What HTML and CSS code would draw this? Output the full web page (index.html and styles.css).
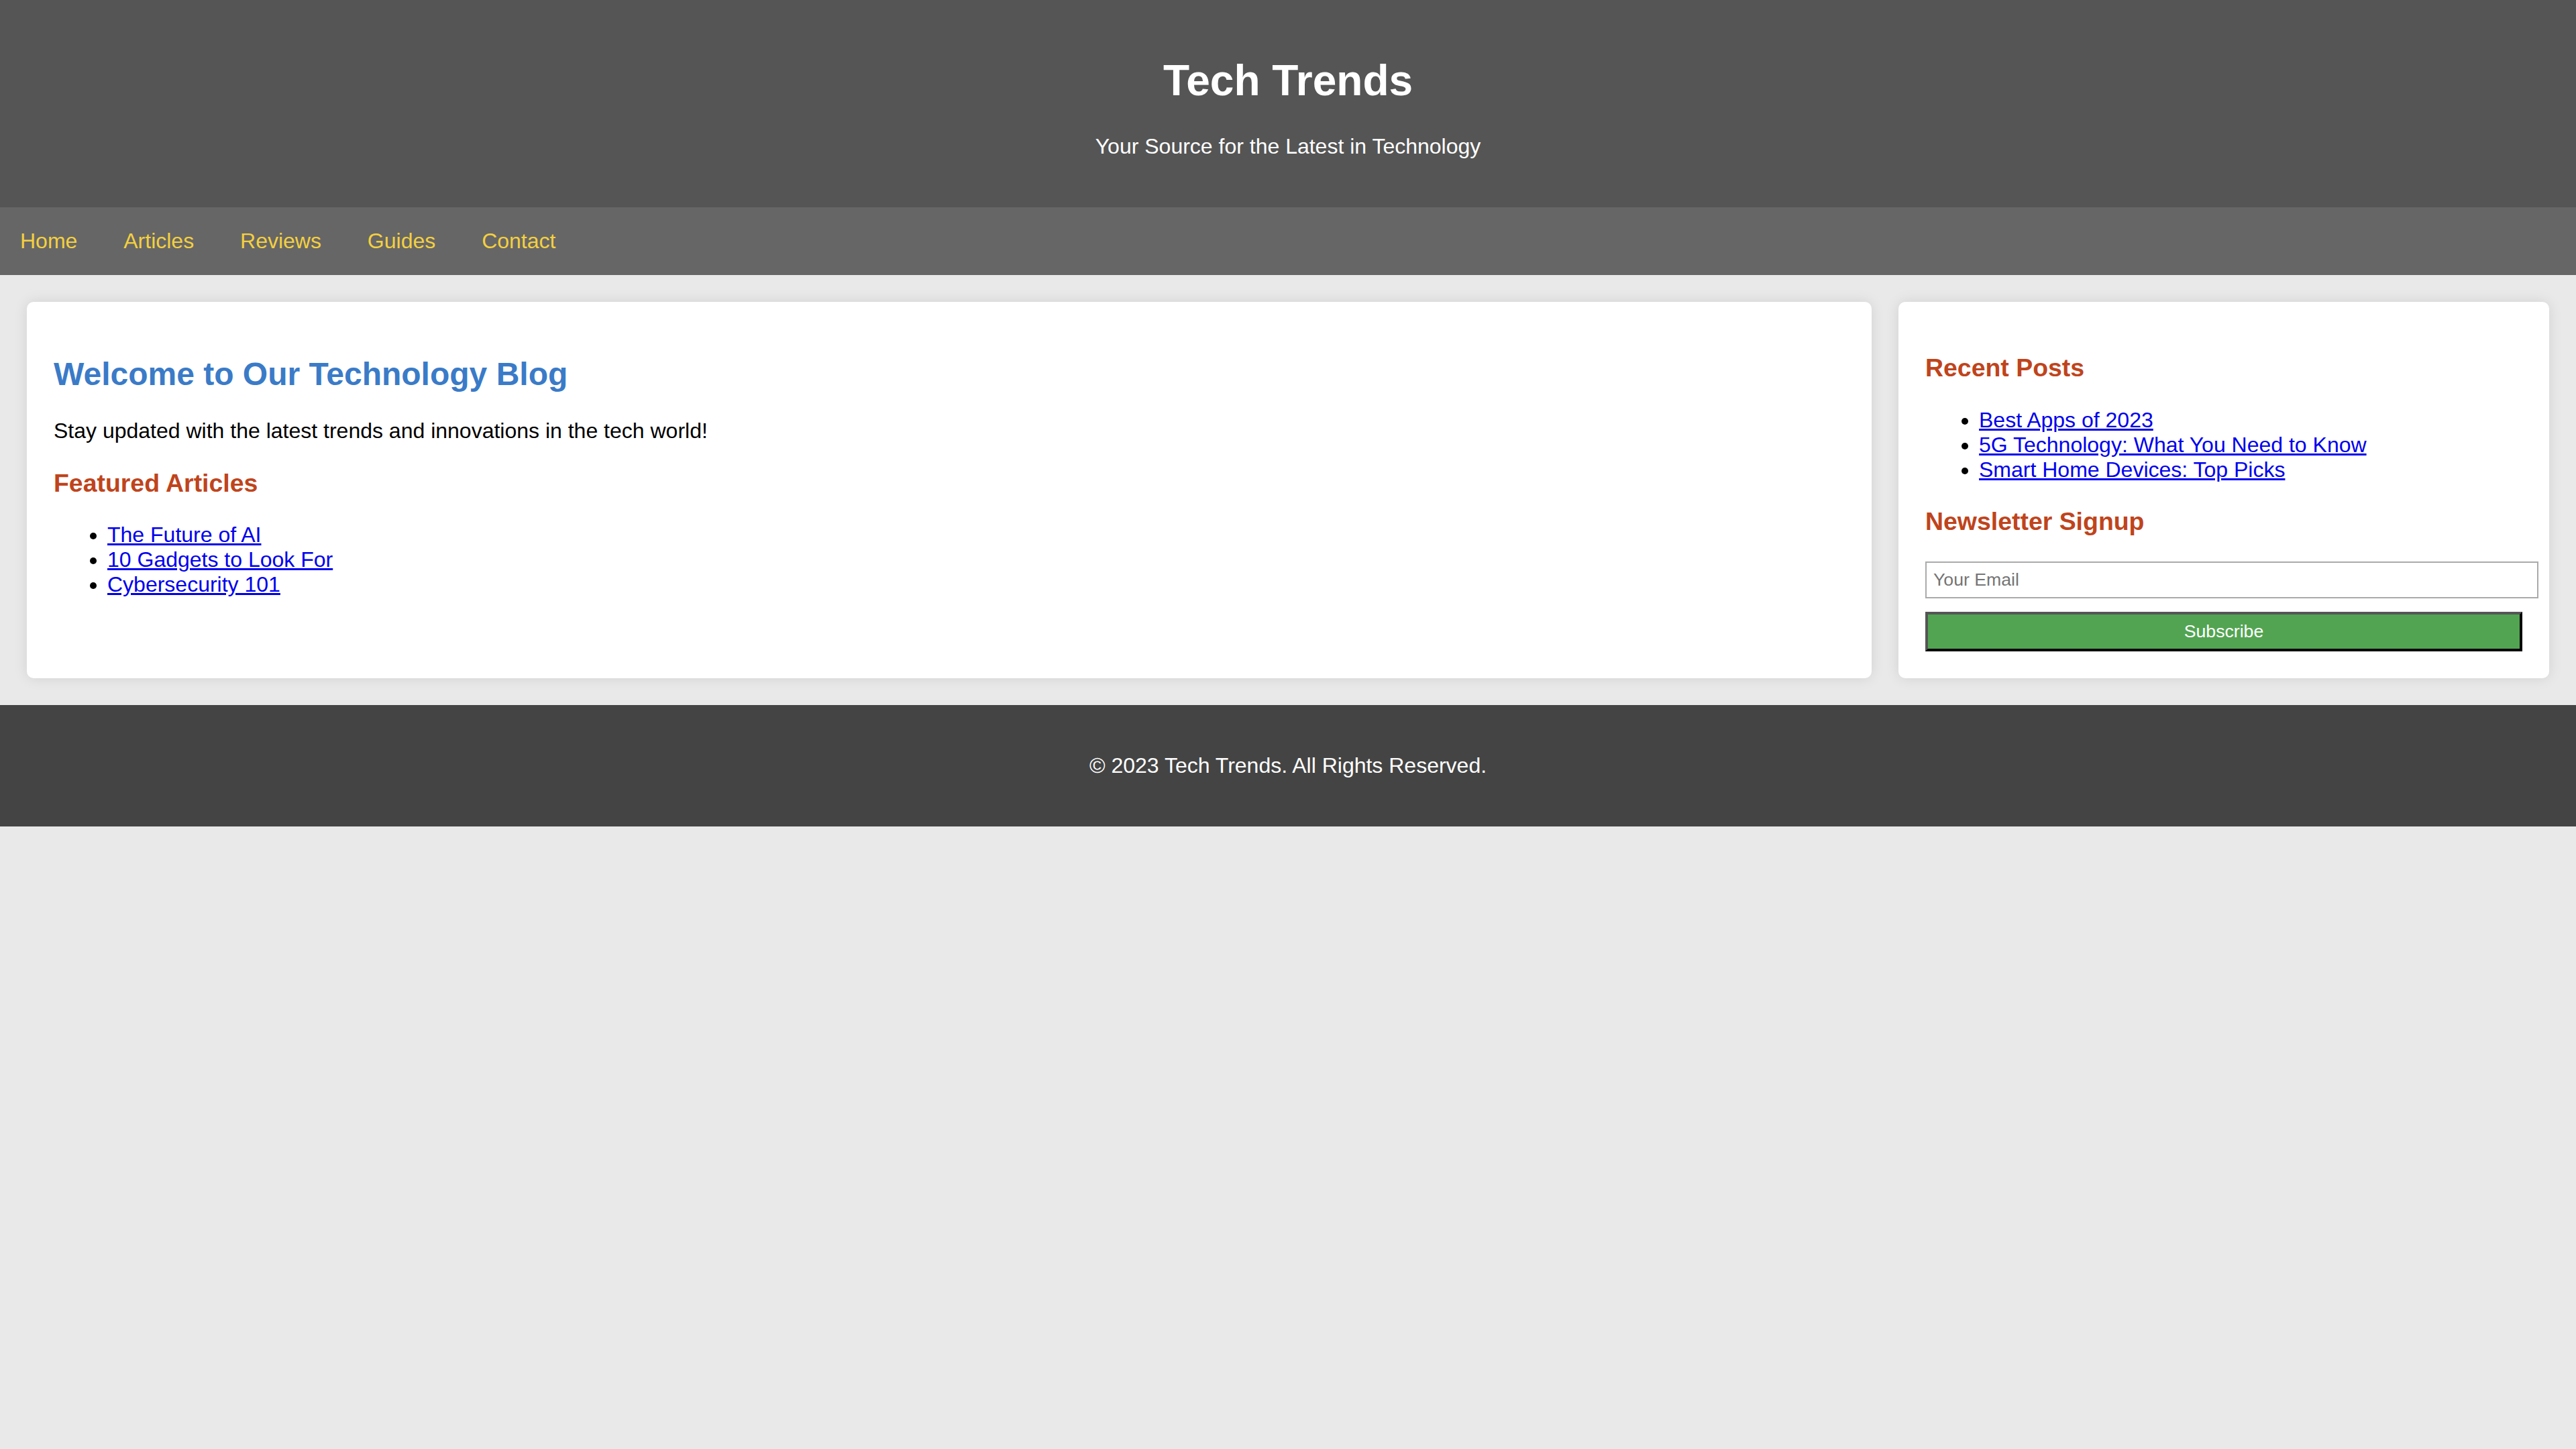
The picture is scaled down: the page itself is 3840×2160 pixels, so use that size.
FILE: index.html
```html
<!DOCTYPE html>
<html lang="en">
<head>
<meta charset="utf-8">
<title>Tech Trends</title>
<link rel="stylesheet" href="styles.css">
</head>
<body>
<header class="site-header">
  <h1 class="site-title">Tech Trends</h1>
  <p class="site-tagline">Your Source for the Latest in Technology</p>
</header>
<nav class="site-nav">
  <a class="nav-link" href="#">Home</a>
  <a class="nav-link" href="#">Articles</a>
  <a class="nav-link" href="#">Reviews</a>
  <a class="nav-link" href="#">Guides</a>
  <a class="nav-link" href="#">Contact</a>
</nav>
<div class="layout">
  <main class="card main-content">
    <h2 class="page-title">Welcome to Our Technology Blog</h2>
    <p class="text">Stay updated with the latest trends and innovations in the tech world!</p>
    <h3 class="section-title">Featured Articles</h3>
    <ul class="link-list">
      <li><a class="list-link" href="#">The Future of AI</a></li>
      <li><a class="list-link" href="#">10 Gadgets to Look For</a></li>
      <li><a class="list-link" href="#">Cybersecurity 101</a></li>
    </ul>
  </main>
  <aside class="card sidebar">
    <h3 class="section-title">Recent Posts</h3>
    <ul class="link-list">
      <li><a class="list-link" href="#">Best Apps of 2023</a></li>
      <li><a class="list-link" href="#">5G Technology: What You Need to Know</a></li>
      <li><a class="list-link" href="#">Smart Home Devices: Top Picks</a></li>
    </ul>
    <h3 class="section-title">Newsletter Signup</h3>
    <form class="signup-form">
      <input class="email-input" type="email" placeholder="Your Email">
      <button class="subscribe-btn" type="button">Subscribe</button>
    </form>
  </aside>
</div>
<footer class="site-footer">
  <p class="footer-text">&copy; 2023 Tech Trends. All Rights Reserved.</p>
</footer>
</body>
</html>
```
FILE: styles.css
```css
html, body {
  margin: 0;
  padding: 0;
}

body {
  background: #e9e9e9;
  font-family: "Liberation Sans", Arial, Helvetica, sans-serif;
  font-size: 32px;
  color: #000;
}

.site-header {
  background: #555555;
  color: #ffffff;
  text-align: center;
  padding: 40px;
}

.site-title {
  font-size: 64px;
  font-weight: bold;
  margin: 42.88px 0;
}

.site-tagline {
  margin: 32px 0;
  font-size: 32px;
}

.site-nav {
  background: #666666;
  display: flex;
  gap: 8.9px;
}

.nav-link {
  display: block;
  padding: 32px 30px;
  color: #f4d03f;
  text-decoration: none;
  font-size: 32px;
}

.layout {
  display: flex;
  align-items: stretch;
  gap: 40px;
  padding: 40px;
}

.card {
  background: #ffffff;
  border-radius: 10px;
  box-shadow: 0 0 20px rgba(0, 0, 0, 0.1);
  padding: 40px;
  box-sizing: content-box;
  min-width: 0;
}

.main-content {
  flex: 3 1 0;
}

.sidebar {
  flex: 1 1 0;
}

.page-title {
  color: #3a7bc8;
  font-size: 48px;
  font-weight: bold;
  margin: 39.84px 0;
}

.text {
  margin: 32px 0;
}

.section-title {
  color: #bf441c;
  font-size: 37.44px;
  font-weight: bold;
  margin: 37.44px 0;
}

.link-list {
  margin: 32px 0;
  padding-left: 80px;
}

.list-link {
  color: #0000ee;
  text-decoration: underline;
}

.signup-form {
  margin: 0;
}

.email-input {
  display: block;
  box-sizing: content-box;
  width: 100%;
  margin: 0 0 20px 0;
  padding: 10px;
  border: 2px solid #aaaaaa;
  border-radius: 0;
  font-family: "Liberation Sans", Arial, sans-serif;
  font-size: 26.67px;
  background: #ffffff;
  outline: none;
}

.email-input::placeholder {
  color: #757575;
}

.subscribe-btn {
  display: block;
  box-sizing: border-box;
  width: 100%;
  margin: 0;
  padding: 10px;
  border-width: 4px;
  border-style: solid;
  border-color: #555555 #000000 #000000 #555555;
  border-radius: 0;
  background: #52a452;
  color: #ffffff;
  font-family: "Liberation Sans", Arial, sans-serif;
  font-size: 26.67px;
}

.site-footer {
  background: #444444;
  color: #ffffff;
  text-align: center;
  padding: 40px;
}

.footer-text {
  margin: 32px 0;
}
```
